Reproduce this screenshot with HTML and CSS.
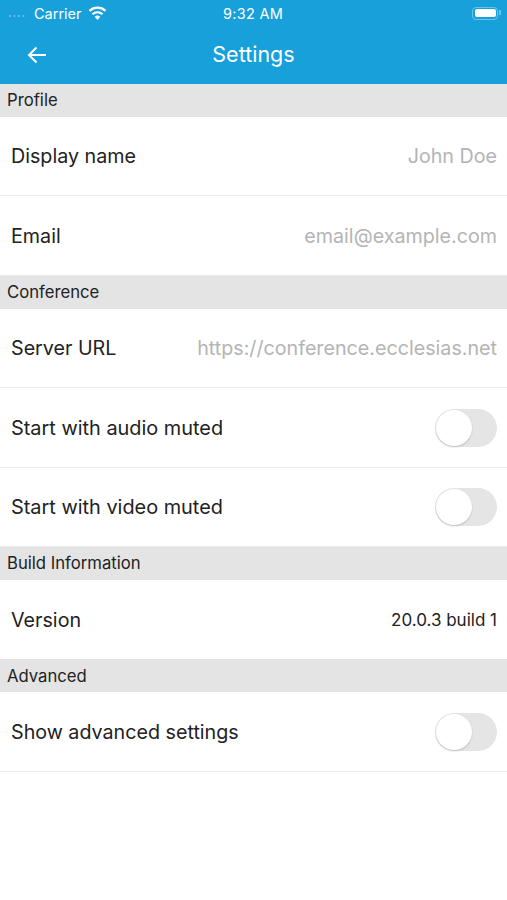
FILE: index.html
```html
<!DOCTYPE html>
<html lang="en">
<head>
<meta charset="utf-8">
<title>Settings</title>
<link rel="stylesheet" href="styles.css">
</head>
<body>
<header class="appbar">
  <div class="status">
    <div class="status-left">
      <svg class="signal" width="20" height="4" viewBox="0 0 20 4"><circle cx="2" cy="2" r="1"/><circle cx="6.5" cy="2" r="1"/><circle cx="11" cy="2" r="1"/><circle cx="15.5" cy="2" r="1"/></svg>
      <span>Carrier</span>
      <svg class="wifi" width="19" height="14" viewBox="0 0 20 15"><path d="M10 15l-3-3.400a4.400 4.400 0 0 1 6 0z" fill="#fff"/><path d="M4.600 8.800a8 8 0 0 1 10.800 0M1.400 5.200a12.600 12.600 0 0 1 17.200 0" fill="none" stroke="#fff" stroke-width="2.300"/></svg>
    </div>
    <span class="clock">9:32 AM</span>
    <div class="battery"><div class="battery-fill"></div></div>
  </div>
  <nav class="nav">
    <svg class="back" width="20" height="18" viewBox="0 0 20 18"><path d="M19 9H2M9.500 1.500L2 9l7.500 7.500" fill="none" stroke="#fff" stroke-width="2"/></svg>
    <h1 class="title">Settings</h1>
  </nav>
</header>
<main>
  <h2 class="section">Profile</h2>
  <div class="row"><span class="label">Display name</span><span class="hint">John Doe</span></div>
  <div class="row"><span class="label">Email</span><span class="hint">email@example.com</span></div>
  <h2 class="section">Conference</h2>
  <div class="row"><span class="label">Server URL</span><span class="hint">https://conference.ecclesias.net</span></div>
  <div class="row"><span class="label label-wide">Start with audio muted</span><span class="switch"><span class="knob"></span></span></div>
  <div class="row"><span class="label label-wide">Start with video muted</span><span class="switch"><span class="knob"></span></span></div>
  <h2 class="section">Build Information</h2>
  <div class="row row-plain"><span class="label">Version</span><span class="value">20.0.3 build 1</span></div>
  <h2 class="section">Advanced</h2>
  <div class="row"><span class="label">Show advanced settings</span><span class="switch"><span class="knob"></span></span></div>
</main>
</body>
</html>
```
FILE: styles.css
```css
* { box-sizing: border-box; }
html, body { margin: 0; padding: 0; }
body {
  width: 507px;
  height: 900px;
  overflow: hidden;
  background: #fff;
  color: #1f1f1f;
  font-family: Inter, "Liberation Sans", sans-serif;
}
.appbar {
  height: 84px;
  background: #17a0da;
  color: #fff;
}
.status {
  height: 26px;
  padding: 0 9px 0 8px;
  display: grid;
  grid-template-columns: 1fr auto 1fr;
  align-items: center;
  font-size: 14.500px;
}
.status-left { display: flex; align-items: center; }
.signal { fill: #6cc3ea; margin-right: 6px; margin-top: 6px; }
.wifi { margin-left: 6px; }
.clock { letter-spacing: 0.3px; }
.battery {
  justify-self: end;
  position: relative;
  width: 26px;
  height: 13px;
  padding: 1.500px;
  border: 1.500px solid #6cc3ea;
  border-radius: 4px;
}
.battery::after {
  content: "";
  position: absolute;
  right: -4px;
  top: 2.500px;
  width: 2px;
  height: 5px;
  background: #6cc3ea;
}
.battery-fill { height: 100%; background: #fff; border-radius: 2px; }
.nav {
  height: 58px;
  position: relative;
  display: flex;
  align-items: center;
  justify-content: center;
  padding-bottom: 2px;
}
.back { position: absolute; left: 27px; top: 20px; }
.title { margin: 0; font-size: 21.500px; font-weight: 400; }
.section {
  margin: 0;
  height: 33px;
  padding: 0 0 0.500px 7px;
  display: flex;
  align-items: center;
  background: #e4e4e4;
  font-size: 16.700px;
  font-weight: 400;
  color: #222;
}
.row {
  height: 79.400px;
  padding: 0.600px 10px 0 11px;
  display: flex;
  align-items: center;
  justify-content: space-between;
  border-bottom: 1px solid #ebebeb;
}
.row-plain { border-bottom: 0; }
.label { font-size: 19.700px; color: #222; }
.label-wide { font-size: 19.900px; }
.hint { font-size: 19.700px; color: #b4b4b4; }
.value { font-size: 17px; color: #222; }
.switch {
  width: 62px;
  height: 38px;
  border-radius: 19px;
  background: #e5e5e5;
  display: flex;
  align-items: center;
  padding: 1px;
}
.knob {
  width: 36px;
  height: 36px;
  border-radius: 50%;
  background: #fff;
  box-shadow: 0 1px 2px rgba(0, 0, 0, 0.18);
}
```
